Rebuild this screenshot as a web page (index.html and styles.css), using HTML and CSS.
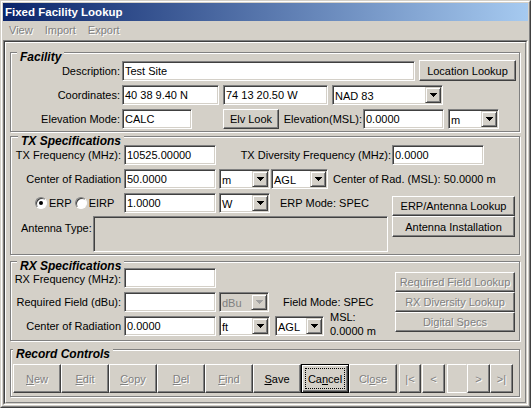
FILE: index.html
```html
<!DOCTYPE html>
<html>
<head>
<meta charset="utf-8">
<title>Fixed Facility Lookup</title>
<link rel="stylesheet" href="styles.css">
</head>
<body>
<div class="window">
 <div class="frame">
  <div class="titlebar">Fixed Facility Lookup</div>
  <div class="menubar"><span class="menu">View</span><span class="menu">Import</span><span class="menu">Export</span></div>
  <div class="panel"><div class="sunk"><div class="raised">

   <div class="group facility">
    <span class="legend lg-fac">Facility</span>
    <div class="row">
     <span class="lbl lw109">Description:</span>
     <div class="edit ml2 w293">Test Site</div>
     <div class="btn ml4 w97 h21 up1">Location Lookup</div>
    </div>
    <div class="row">
     <span class="lbl lw109">Coordinates:</span>
     <div class="edit ml2 w97">40 38 9.40 N</div>
     <div class="edit ml4 w105">74 13 20.50 W</div>
     <div class="combo ml4 w111"><span class="ctext">NAD 83</span><span class="cbtn"><svg width="7" height="4" viewBox="0 0 7 4" shape-rendering="crispEdges"><path d="M0 0h7v1h-1v1h-1v1h-1v1h-1v-1h-1v-1h-1v-1h-1z"/></svg></span></div>
    </div>
    <div class="row">
     <span class="lbl lw109">Elevation Mode:</span>
     <div class="edit ml2 w70">CALC</div>
     <div class="btn ml31 w56">Elv Look</div>
     <span class="lbl lw83">Elevation(MSL):</span>
     <div class="edit ml1 w81">0.0000</div>
     <div class="combo ml4 w51"><span class="ctext">m</span><span class="cbtn"><svg width="7" height="4" viewBox="0 0 7 4" shape-rendering="crispEdges"><path d="M0 0h7v1h-1v1h-1v1h-1v1h-1v-1h-1v-1h-1v-1h-1z"/></svg></span></div>
    </div>
   </div>

   <div class="group tx">
    <span class="legend lg-tx">TX Specifications</span>
    <div class="row">
     <span class="lbl lw110">TX Frequency (MHz):</span>
     <div class="edit ml3 w92">10525.00000</div>
     <span class="lbl lw175">TX Diversity Frequency (MHz):</span>
     <div class="edit ml1 w92">0.0000</div>
    </div>
    <div class="row">
     <span class="lbl lw110">Center of Radiation</span>
     <div class="edit ml3 w92">50.0000</div>
     <div class="combo ml3 w51"><span class="ctext">m</span><span class="cbtn"><svg width="7" height="4" viewBox="0 0 7 4" shape-rendering="crispEdges"><path d="M0 0h7v1h-1v1h-1v1h-1v1h-1v-1h-1v-1h-1v-1h-1z"/></svg></span></div>
     <div class="combo ml1 w57"><span class="ctext">AGL</span><span class="cbtn"><svg width="7" height="4" viewBox="0 0 7 4" shape-rendering="crispEdges"><path d="M0 0h7v1h-1v1h-1v1h-1v1h-1v-1h-1v-1h-1v-1h-1z"/></svg></span></div>
     <span class="text ml5">Center of Rad. (MSL): 50.0000 m</span>
    </div>
    <div class="row">
     <div class="radios">
      <span class="radio on"></span><span class="rlbl">ERP</span>
      <span class="radio ml3"></span><span class="rlbl">EIRP</span>
     </div>
     <div class="edit w92">1.0000</div>
     <div class="combo ml3 w51"><span class="ctext">W</span><span class="cbtn"><svg width="7" height="4" viewBox="0 0 7 4" shape-rendering="crispEdges"><path d="M0 0h7v1h-1v1h-1v1h-1v1h-1v-1h-1v-1h-1v-1h-1z"/></svg></span></div>
     <span class="text ml10 w112">ERP Mode: SPEC</span>
     <div class="btn w123 mt3">ERP/Antenna Lookup</div>
    </div>
    <div class="row mt0">
     <span class="text antlbl">Antenna Type:</span>
     <div class="static"></div>
     <div class="btn ml4 w123 h21">Antenna Installation</div>
    </div>
   </div>

   <div class="group rx">
    <span class="legend lg-rx">RX Specifications</span>
    <div class="rxbody">
     <div class="rxleft">
      <div class="row">
       <span class="lbl lw110 low">RX Frequency (MHz):</span>
       <div class="edit ml3 w92"></div>
      </div>
      <div class="row">
       <span class="lbl lw110">Required Field (dBu):</span>
       <div class="edit ml3 w92"></div>
       <div class="combo disabled ml3 w50"><span class="ctext">dBu</span><span class="cbtn"><svg width="7" height="4" viewBox="0 0 7 4" shape-rendering="crispEdges"><path d="M0 0h7v1h-1v1h-1v1h-1v1h-1v-1h-1v-1h-1v-1h-1z"/></svg></span></div>
       <span class="text ml14">Field Mode: SPEC</span>
      </div>
      <div class="row">
       <span class="lbl lw110">Center of Radiation</span>
       <div class="edit ml3 w92">0.0000</div>
       <div class="combo ml3 w51"><span class="ctext">ft</span><span class="cbtn"><svg width="7" height="4" viewBox="0 0 7 4" shape-rendering="crispEdges"><path d="M0 0h7v1h-1v1h-1v1h-1v1h-1v-1h-1v-1h-1v-1h-1z"/></svg></span></div>
       <div class="combo ml5 w49"><span class="ctext">AGL</span><span class="cbtn"><svg width="7" height="4" viewBox="0 0 7 4" shape-rendering="crispEdges"><path d="M0 0h7v1h-1v1h-1v1h-1v1h-1v-1h-1v-1h-1v-1h-1z"/></svg></span></div>
       <div class="msl ml6">MSL:<br>0.0000 m</div>
      </div>
     </div>
     <div class="rxbtns">
      <div class="btn dis w120">Required Field Lookup</div>
      <div class="btn dis w120">RX Diversity Lookup</div>
      <div class="btn dis w120">Digital Specs</div>
     </div>
    </div>
   </div>

   <div class="group rec">
    <span class="legend lg-rec">Record Controls</span>
    <div class="recrow">
     <div class="btn rb dis"><u>N</u>ew</div>
     <div class="btn rb dis"><u>E</u>dit</div>
     <div class="btn rb dis"><u>C</u>opy</div>
     <div class="btn rb dis"><u>D</u>el</div>
     <div class="btn rb dis"><u>F</u>ind</div>
     <div class="btn rb"><u>S</u>ave</div>
     <div class="btn rb default">Ca<u>n</u>cel</div>
     <div class="btn rb dis">Cl<u>o</u>se</div>
     <div class="btn nb dis ml2 w22">|&lt;</div>
     <div class="btn nb dis ml1 w23">&lt;</div>
     <div class="navbox"></div>
     <div class="btn nb dis w23">&gt;</div>
     <div class="btn nb dis w23">&gt;|</div>
    </div>
   </div>

  </div></div></div>
 </div>
</div>
</body>
</html>
```

FILE: styles.css
```css
* { box-sizing: border-box; }
html, body { margin: 0; padding: 0; background: #d4d0c8; }
body {
  font-family: "Liberation Sans", Arial, sans-serif;
  font-size: 11px;
  color: #000;
}

.window {
  width: 531px;
  height: 408px;
  border: 1px solid;
  border-color: #d4d0c8 #404040 #404040 #d4d0c8;
}
.frame {
  height: 100%;
  border: 1px solid;
  border-color: #fff #808080 #808080 #fff;
  padding: 1px;
  display: flex;
  flex-direction: column;
}
.titlebar {
  flex: none;
  height: 18px;
  line-height: 18px;
  padding-left: 2px;
  background: linear-gradient(to right, #0a246a, #a6caf0);
  color: #fff;
  font-weight: bold;
  font-size: 11.5px;
  white-space: nowrap;
}
.menubar {
  flex: none;
  height: 19px;
  line-height: 19px;
  display: flex;
}
.menu {
  padding: 0 6px;
  color: #808080;
  text-shadow: 1px 1px 0 #fff;
}

.panel {
  flex: 1;
  display: flex;
  border: 1px solid;
  border-color: #808080 #fff #fff #808080;
}
.sunk {
  flex: 1;
  display: flex;
  border: 1px solid;
  border-color: #404040 #d4d0c8 #d4d0c8 #404040;
}
.raised {
  flex: 1;
  border: 1px solid;
  border-color: #fff #808080 #808080 #fff;
  padding: 9px 0 0 4px;
}

/* group boxes */
.group {
  position: relative;
  width: 510px;
  border: 1px solid #808080;
  box-shadow: 1px 1px 0 #fff, inset 1px 1px 0 #fff;
}
.facility { height: 80px; padding-top: 8px; }
.tx { margin-top: 4px; height: 119px; padding-top: 8px; }
.rx { margin-top: 6px; height: 80px; padding-top: 6px; }
.rec { margin-top: 8px; height: 48px; padding-top: 14px; }

.legend {
  position: absolute;
  top: -3px;
  padding: 0 3px;
  background: #d4d0c8;
  font-weight: bold;
  font-style: italic;
  font-size: 12px;
  line-height: 14px;
  white-space: nowrap;
}
.lg-fac { left: 6px; }
.lg-tx { left: 7px; }
.lg-rx { left: 6px; }
.lg-rec { left: 2px; }

/* rows */
.row {
  display: flex;
  align-items: flex-start;
}
.row + .row { margin-top: 4px; }
.row.mt0 { margin-top: 0; }

.lbl, .text, .rlbl {
  flex: none;
  height: 20px;
  line-height: 20px;
  white-space: nowrap;
}
.lbl { text-align: right; }
.lbl.low { line-height: 23px; }
.lw109 { width: 109px; }
.lw110 { width: 110px; }
.lw83 { width: 83px; }
.lw175 { width: 175px; }

/* edit boxes */
.edit {
  flex: none;
  height: 20px;
  line-height: 16px;
  padding: 1px 2px 0 2px;
  background: #fff;
  border: 1px solid;
  border-color: #808080 #fff #fff #808080;
  box-shadow: inset 1px 1px 0 #404040, inset -1px -1px 0 #d4d0c8;
  white-space: nowrap;
  overflow: hidden;
}

/* combo boxes */
.combo {
  flex: none;
  display: flex;
  height: 20px;
  padding: 1px;
  background: #fff;
  border: 1px solid;
  border-color: #808080 #fff #fff #808080;
  box-shadow: inset 1px 1px 0 #404040, inset -1px -1px 0 #d4d0c8;
}
.ctext {
  flex: 1;
  line-height: 17px;
  padding-left: 1px;
  padding-top: 1px;
  white-space: nowrap;
  overflow: hidden;
}
.cbtn {
  flex: none;
  width: 16px;
  height: 16px;
  display: flex;
  align-items: center;
  justify-content: center;
  background: #d4d0c8;
  border: 1px solid;
  border-color: #d4d0c8 #404040 #404040 #d4d0c8;
  box-shadow: inset 1px 1px 0 #fff, inset -1px -1px 0 #808080;
}
.cbtn svg { display: block; fill: #000; }
.combo.disabled { background: #d4d0c8; }
.combo.disabled .ctext { color: #808080; }
.combo.disabled .cbtn svg { fill: #a0a0a0; }

/* buttons */
.btn {
  flex: none;
  height: 20px;
  display: flex;
  align-items: center;
  justify-content: center;
  background: #d4d0c8;
  border: 1px solid;
  border-color: #fff #404040 #404040 #fff;
  box-shadow: inset -1px -1px 0 #808080;
  white-space: nowrap;
}
.btn.h21 { height: 21px; }
.btn.up1 { margin-top: -1px; }
.btn.mt3 { margin-top: 3px; }
.dis {
  color: #808080;
  text-shadow: 1px 1px 0 #fff;
}
.default {
  position: relative;
  border-color: #000;
  box-shadow: inset 1px 1px 0 #fff, inset -1px -1px 0 #404040, inset -2px -2px 0 #808080;
}
.default::after {
  content: "";
  position: absolute;
  left: 3px;
  top: 3px;
  right: 3px;
  bottom: 3px;
  border: 1px dotted #000;
}

/* radios */
.radios {
  flex: none;
  display: flex;
  align-items: flex-start;
  width: 113px;
  padding-left: 24px;
}
.radio {
  flex: none;
  position: relative;
  width: 12px;
  height: 12px;
  margin-top: 4px;
  border-radius: 50%;
  background: #fff;
  border: 1px solid;
  border-color: #808080 #fff #fff #808080;
  box-shadow: inset 1px 1px 0 #404040;
}
.radio.on::after {
  content: "";
  position: absolute;
  left: 3px;
  top: 3px;
  width: 4px;
  height: 4px;
  border-radius: 50%;
  background: #000;
}
.rlbl { margin-left: 2px; }

/* antenna row */
.antlbl {
  width: 82px;
  padding-left: 10px;
  margin-top: 2px;
}
.static {
  flex: none;
  width: 295px;
  height: 36px;
  border: 1px solid;
  border-color: #808080 #fff #fff #808080;
  box-shadow: inset 1px 1px 0 #404040, inset -1px -1px 0 #d4d0c8;
}

/* rx */
.rxbody { display: flex; }
.rxleft { width: 384px; flex: none; }
.rxbtns {
  flex: none;
  margin-top: 4px;
  display: flex;
  flex-direction: column;
}
.msl {
  flex: none;
  line-height: 14px;
  margin-top: -6px;
  white-space: nowrap;
}

/* record controls */
.recrow {
  display: flex;
  padding-left: 2px;
}
.rb { width: 48px; height: 29px; }
.nb { height: 29px; }
.navbox {
  flex: none;
  width: 20px;
  height: 29px;
  margin-left: 2px;
  border: 1px solid;
  border-color: #fff #d4d0c8 #fff #fff;
}

/* sizing helpers */
.w22 { width: 22px; }
.w23 { width: 23px; }
.w49 { width: 49px; }
.w50 { width: 50px; }
.w51 { width: 51px; }
.w56 { width: 56px; }
.w57 { width: 57px; }
.w70 { width: 70px; }
.w81 { width: 81px; }
.w92 { width: 92px; }
.w97 { width: 97px; }
.w105 { width: 105px; }
.w111 { width: 111px; }
.w112 { width: 112px; }
.w120 { width: 120px; }
.w123 { width: 123px; }
.w293 { width: 293px; }
.ml1 { margin-left: 1px; }
.ml2 { margin-left: 2px; }
.ml3 { margin-left: 3px; }
.ml4 { margin-left: 4px; }
.ml5 { margin-left: 5px; }
.ml6 { margin-left: 6px; }
.ml10 { margin-left: 10px; }
.ml14 { margin-left: 14px; }
.ml31 { margin-left: 31px; }
```
